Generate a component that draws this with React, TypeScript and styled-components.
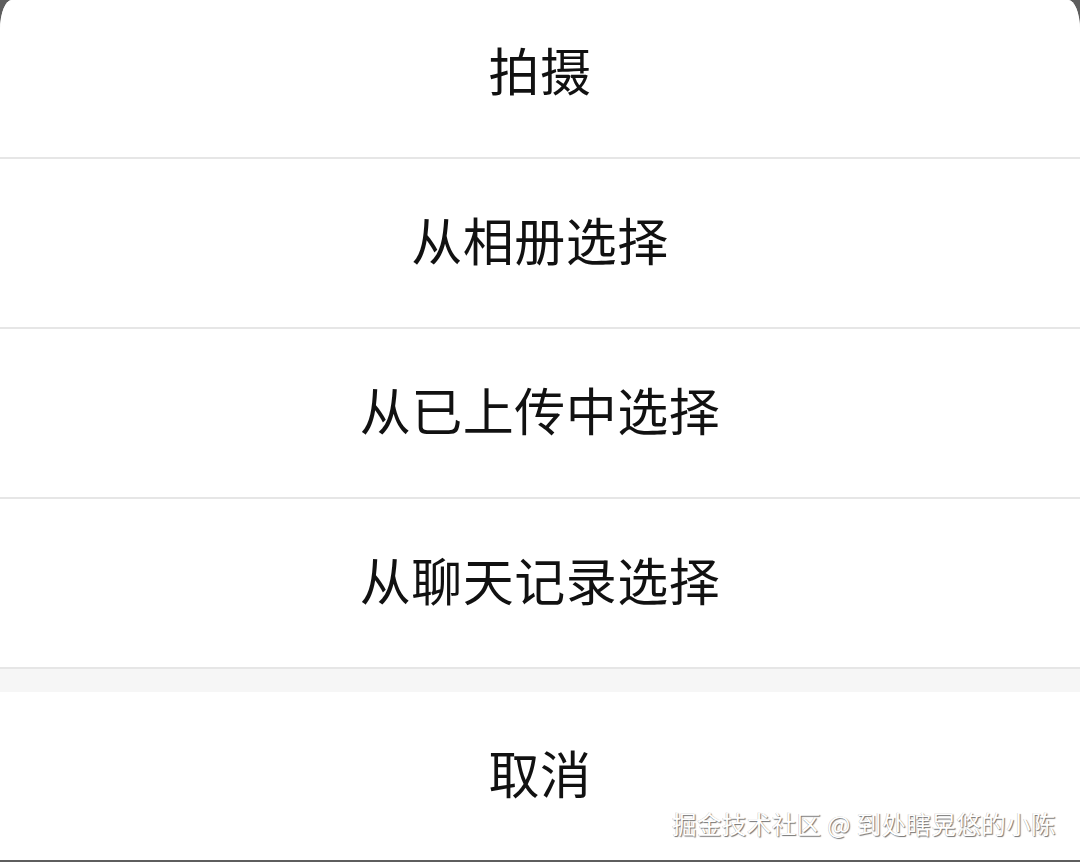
import React from 'react';
import styled, { createGlobalStyle } from 'styled-components';

const GlobalStyle = createGlobalStyle`
  html, body {
    margin: 0;
    padding: 0;
    background: #5e5e5e;
  }
  body {
    font-family: "Noto Sans CJK SC", "Noto Sans", sans-serif;
  }
`;

const Page = styled.div`
  position: relative;
  width: 1080px;
  height: 862px;
  overflow: hidden;
  background: #5e5e5e;
`;

const Sheet = styled.div`
  display: flex;
  flex-direction: column;
  background: #ffffff;
  border-top-left-radius: 12px 30px;
  border-top-right-radius: 12px 30px;
  overflow: hidden;
`;

const Option = styled.div<{ $first?: boolean; $last?: boolean }>`
  display: flex;
  align-items: center;
  justify-content: center;
  box-sizing: border-box;
  height: ${(p) => (p.$last ? '168px' : '170px')};
  padding-bottom: 8px;
  margin-top: ${(p) => (p.$first ? '-11px' : '0')};
  border-bottom: ${(p) => (p.$last ? 'none' : '2px solid #e6e6e6')};
  font-size: 51px;
  letter-spacing: 0.5px;
  color: #111111;
  line-height: 1;
  background: #ffffff;
`;

const Gap = styled.div`
  height: 23px;
  background: #f6f6f6;
`;

const Watermark = styled.div`
  position: absolute;
  right: 24px;
  bottom: 26px;
  font-size: 24.5px;
  letter-spacing: 0.4px;
  line-height: 1;
  color: #ffffff;
  white-space: pre;
  text-shadow: 1px 1px 1px rgba(0, 0, 0, 0.55), -0.5px -0.5px 0 rgba(0, 0, 0, 0.25);
`;

const items = ['拍摄', '从相册选择', '从已上传中选择', '从聊天记录选择'];

const App: React.FC = () => {
  return (
    <>
      <GlobalStyle />
      <Page>
        <Sheet>
          {items.map((label, i) => (
            <Option key={label} $first={i === 0}>
              {label}
            </Option>
          ))}
          <Gap />
          <Option $last>取消</Option>
        </Sheet>
        <Watermark>掘金技术社区 @ 到处瞎晃悠的小陈</Watermark>
      </Page>
    </>
  );
};

export default App;
